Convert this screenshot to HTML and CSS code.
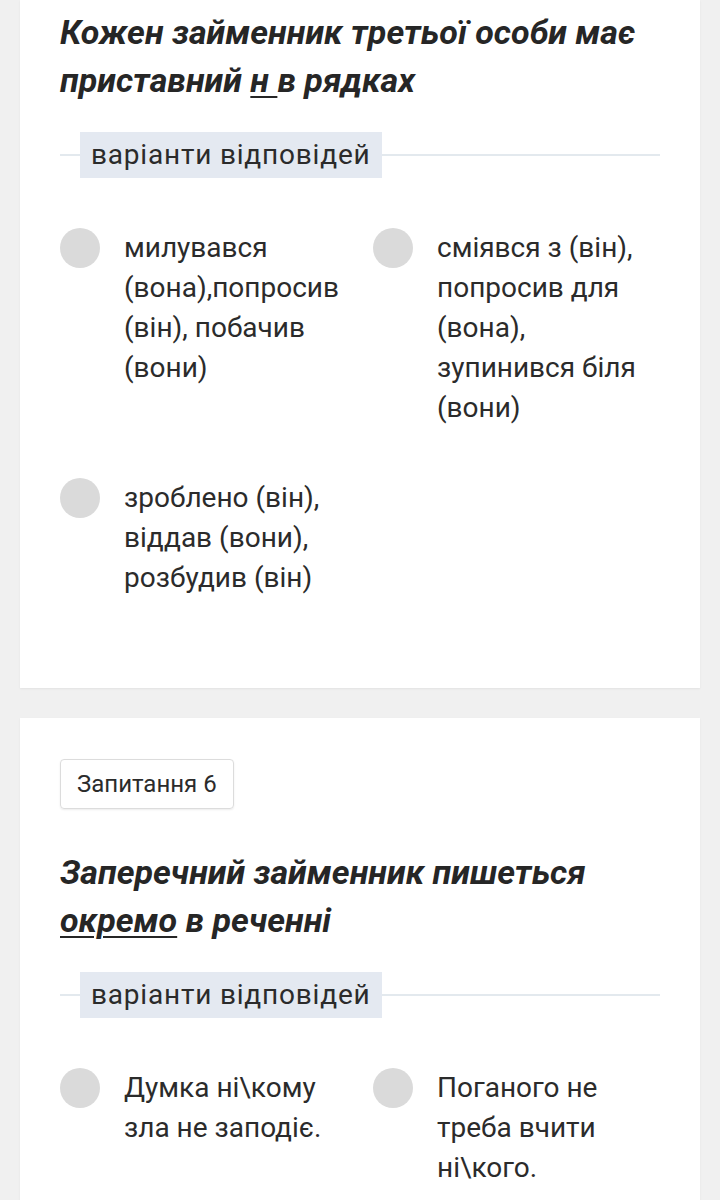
FILE: index.html
```html
<!DOCTYPE html>
<html lang="uk">
<head>
<meta charset="utf-8">
<link rel="stylesheet" href="styles.css">
</head>
<body>
<div class="page">
  <section class="card card-first">
    <h2 class="question">Кожен займенник третьої особи має приставний <u>н </u>в рядках</h2>
    <div class="divider"><span class="divider-label">варіанти відповідей</span></div>
    <div class="options">
      <div class="option"><span class="radio"></span><span class="option-text">милувався (вона),попросив (він), побачив (вони)</span></div>
      <div class="option"><span class="radio"></span><span class="option-text">сміявся з (він), попросив для (вона), зупинився біля (вони)</span></div>
      <div class="option"><span class="radio"></span><span class="option-text">зроблено (він), віддав (вони), розбудив (він)</span></div>
    </div>
  </section>
  <section class="card">
    <div class="badge">Запитання 6</div>
    <h2 class="question">Заперечний займенник пишеться <u>окремо</u> в реченні</h2>
    <div class="divider"><span class="divider-label">варіанти відповідей</span></div>
    <div class="options">
      <div class="option"><span class="radio"></span><span class="option-text">Думка ні\кому зла не заподіє.</span></div>
      <div class="option"><span class="radio"></span><span class="option-text">Поганого не треба вчити ні\кого.</span></div>
    </div>
  </section>
</div>
</body>
</html>
```

FILE: styles.css
```css
html, body {
  margin: 0;
  padding: 0;
  background: #f0f0f0;
}
body {
  font-family: Roboto, "Noto Sans", sans-serif;
  color: #2b2b2b;
}
.page {
  padding: 0 20px;
  display: flex;
  flex-direction: column;
  gap: 30px;
}
.card {
  background: #ffffff;
  padding: 41px 40px 40px;
  box-shadow: 0 1px 2px rgba(0,0,0,0.06);
}
.card-first {
  padding-top: 8px;
}
.badge {
  display: inline-block;
  box-sizing: border-box;
  height: 50px;
  line-height: 48px;
  padding: 0 16px;
  border: 1px solid #dcdcdc;
  border-radius: 4px;
  box-shadow: 0 1px 2px rgba(0,0,0,0.08);
  font-size: 24px;
  color: #2b2b2b;
  margin-bottom: 39px;
}
.question {
  margin: 0;
  font-size: 34px;
  line-height: 48px;
  font-weight: 700;
  font-style: italic;
  color: #262626;
}
.question u {
  text-decoration-thickness: 2px;
  text-underline-offset: 4px;
}
.divider {
  margin-top: 28px;
  position: relative;
  display: flex;
  align-items: center;
  height: 46px;
}
.divider::before {
  content: "";
  position: absolute;
  left: 0;
  right: 0;
  top: 50%;
  height: 2px;
  margin-top: -1px;
  background: #e3e9ee;
}
.divider-label {
  position: relative;
  margin-left: 20px;
  background: #e4e9f1;
  height: 46px;
  line-height: 46px;
  padding: 0 11px;
  font-size: 28px;
  letter-spacing: 0.8px;
  color: #2b2b2b;
}
.options {
  margin-top: 50px;
  display: grid;
  grid-template-columns: 286px 286px;
  column-gap: 27px;
  row-gap: 50px;
  margin-bottom: 50px;
}
.option {
  display: flex;
  align-items: flex-start;
  gap: 24px;
}
.radio {
  flex: 0 0 40px;
  width: 40px;
  height: 40px;
  border-radius: 50%;
  background: #dadada;
}
.option-text {
  font-size: 28px;
  line-height: 40px;
  color: #2b2b2b;
}
```
